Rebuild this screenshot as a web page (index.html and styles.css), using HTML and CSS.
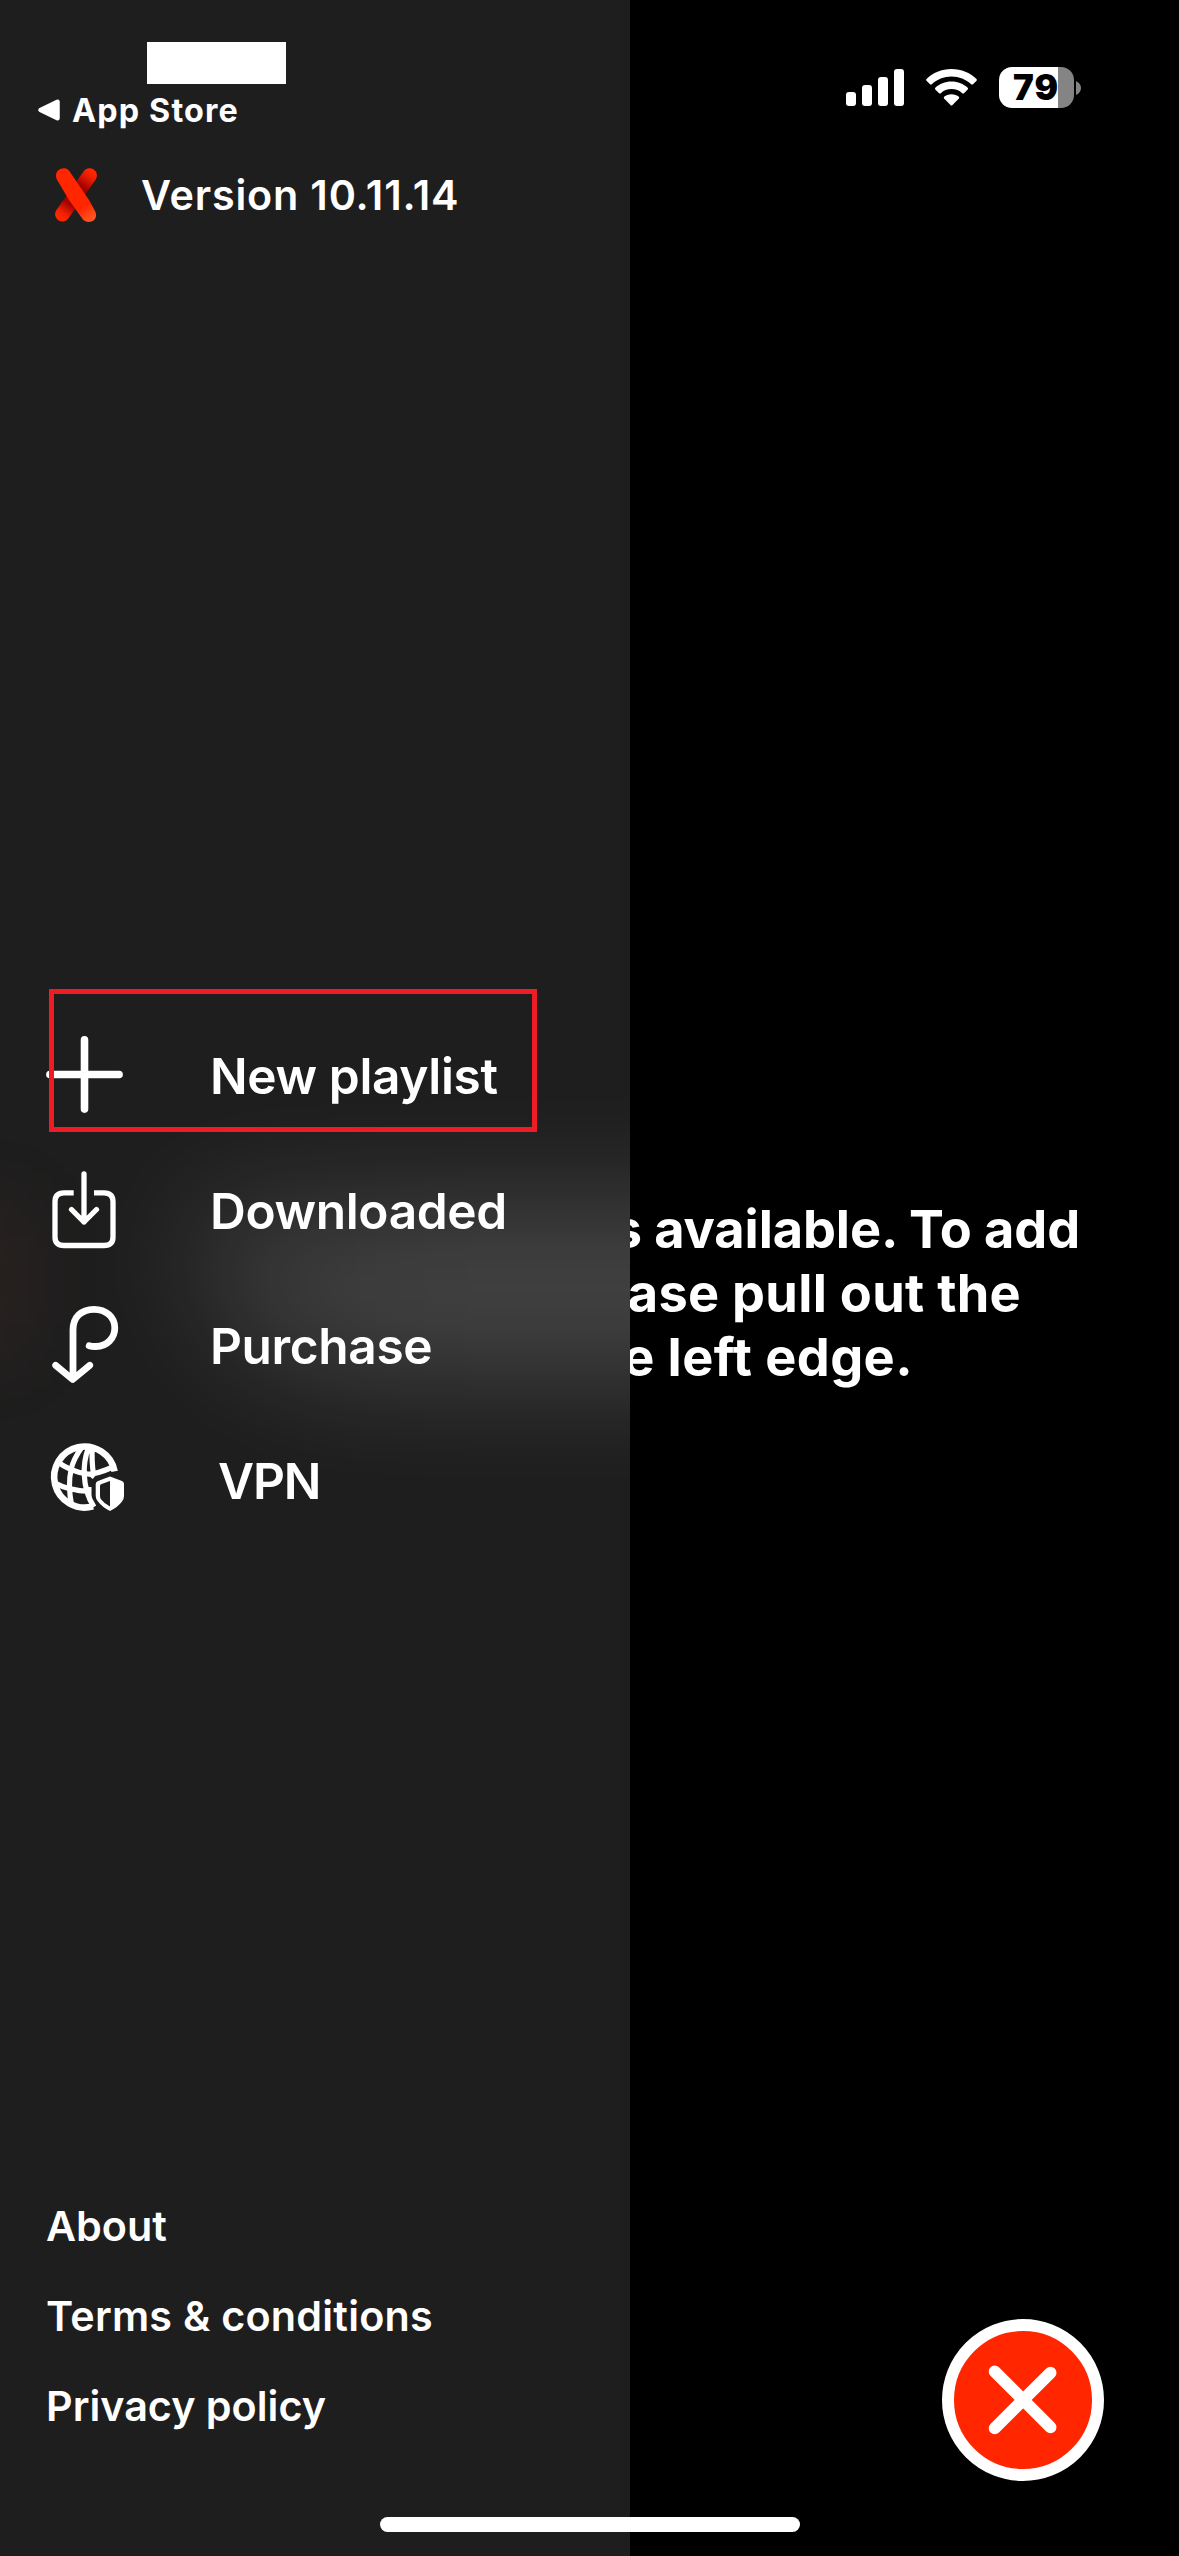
FILE: index.html
```html
<!DOCTYPE html>
<html lang="en">
<head>
<meta charset="utf-8">
<title>Menu</title>
<link rel="stylesheet" href="styles.css">
</head>
<body>
<div class="screen">
  <aside class="drawer">
    <div class="glow"></div>
    <div class="glow-warm"></div>
    <div class="time-mask"></div>
    <div class="back">
      <svg class="back-arrow" viewBox="0 0 24 24"><path d="M3.500 12 20.500 3.800V20.200Z" fill="#fff" stroke="#fff" stroke-width="4.500" stroke-linejoin="round"/></svg>
      <span>App Store</span>
    </div>
    <div class="version">
      <svg class="logo" viewBox="0 0 42 54">
        <defs>
          <linearGradient id="back-limb" gradientUnits="userSpaceOnUse" x1="38" y1="5" x2="5" y2="49">
            <stop offset="0" stop-color="#ff2600"/><stop offset=".13" stop-color="#e01b00"/><stop offset=".32" stop-color="#a00000"/>
            <stop offset=".7" stop-color="#a00000"/><stop offset=".9" stop-color="#ee2000"/><stop offset="1" stop-color="#ff2600"/>
          </linearGradient>
          <linearGradient id="front-limb" gradientUnits="userSpaceOnUse" x1="7" y1="7" x2="38" y2="52">
            <stop offset="0" stop-color="#ff2600"/><stop offset=".7" stop-color="#ff2600"/><stop offset="1" stop-color="#ff5a26"/>
          </linearGradient>
        </defs>
        <path d="M34.600 7.500 7.400 46.300" stroke="url(#back-limb)" stroke-width="14.600" stroke-linecap="round"/>
        <path d="M1.600 11C-1 4 5 -1 11 .600Q13.500 1.500 15 4L34 32 40 43C44 51 36 56 30 53Q28 52 26.500 49.500L14 32Z" fill="url(#front-limb)"/>
      </svg>
      <span>Version 10.11.14</span>
    </div>
    <nav class="menu">
      <a class="item">
        <svg class="icon" viewBox="0 0 90 135"><path d="M9.900 66.500H79.100M44.500 31.900V101.100" stroke-width="7.600"/></svg>
        <span>New playlist</span>
      </a>
      <a class="item">
        <svg class="icon" viewBox="0 0 90 135"><path d="M33.700 49.800H24Q15 49.800 15 58.800V94Q15 102.500 24 102.500H64Q73 102.500 73 94V58.800Q73 49.800 64 49.800H54" stroke-width="5.300" stroke-linecap="butt"/><path d="M44 31V79M31.500 66.500 44 79 56.500 66.500" stroke-width="5.300"/></svg>
        <span>Downloaded</span>
      </a>
      <a class="item">
        <svg class="icon" viewBox="0 0 90 135"><path d="M49.200 67.700Q52 68.600 56 68.500C67 68.500 74.800 60 74.800 50C74.800 39 66 31.300 54 31.300C41 31.300 33 39.500 33 52V101M15.700 87.300 32.700 101.500 49.700 87.300" stroke-width="6.800"/></svg>
        <span>Purchase</span>
      </a>
      <a class="item item-vpn">
        <svg class="icon" viewBox="0 0 90 135">
          <path d="M74.600 58.300A30.500 30.500 0 1 0 53 93.400" stroke-width="6.600" stroke-linecap="butt"/>
          <path d="M41.700 34.500Q33.500 46 31.200 56Q27.500 72 31.700 93M48.500 34.500Q43.500 48 44.300 62Q45 80 54 94M52.300 34.500Q51.500 47 53.500 62M16 47.500Q30 59 48 61Q56 61.500 73 54M15 70Q28 77.500 50 78.500" stroke-width="5.200" stroke-linecap="butt"/>
          <path class="solid" d="M70 63.500 82 68Q84 69 84 71V83Q84 86 82 88.500Q78 94 70 98Q62 94 58 88.500Q55.700 86 55.700 83V71Q55.700 69 58 68ZM70 68 61 71.300Q60 71.700 60 73V83Q60 85 61 86.300Q64.500 91 70 93.500Z"/>
          <path d="M50.500 61.500 54 64.500M49.500 74V87" stroke-width="4" stroke-linecap="butt"/>
        </svg>
        <span>VPN</span>
      </a>
    </nav>
    <div class="links">
      <a>About</a>
      <a class="terms">Terms &amp; conditions</a>
      <a>Privacy policy</a>
    </div>
  </aside>
  <main class="content">
    <div class="status">
      <svg class="signal" viewBox="0 0 58 37" fill="#fff"><rect y="23" width="10" height="14" rx="3"/><rect x="16" y="16" width="10" height="21" rx="3"/><rect x="32" y="8" width="10" height="29" rx="3"/><rect x="48" width="10" height="37" rx="3"/></svg>
      <svg class="wifi" viewBox="0 0 51 37" fill="#fff"><path d="M25.500 0C35.500 0 44 3.800 50.500 10Q51.200 10.900 50.500 11.800L47 15.300Q46 16 45.200 15.300C40 10.400 33 7.500 25.500 7.500S11 10.400 5.800 15.300Q5 16 4 15.300L.500 11.800Q-.200 10.900 .500 10C7 3.800 15.500 0 25.500 0Z"/><path d="M25.500 12.600C32 12.600 37.500 15 41.700 18.800Q42.500 19.700 41.700 20.600L38 24.200Q37 25 36.200 24.200C33.300 21.600 29.700 20.100 25.500 20.100S17.700 21.600 14.800 24.200Q14 25 13 24.200L9.300 20.600Q8.500 19.700 9.300 18.800C13.500 15 19 12.600 25.500 12.600Z"/><path d="M25.500 25.300C28.500 25.300 31 26.200 32.900 27.700Q33.600 28.600 32.900 29.400L26.500 36Q25.500 37 24.500 36L18.100 29.400Q17.400 28.600 18.100 27.700C20 26.200 22.500 25.300 25.500 25.300Z"/></svg>
      <div class="battery"><span>79</span></div>
      <svg class="nub" viewBox="0 0 5 14"><path d="M0 0Q5 2.500 5 7T0 14Z" fill="#848484"/></svg>
    </div>
    <div class="message">
      <div class="line line-1">s available. To add</div>
      <div class="line line-2">ase pull out the</div>
      <div class="line line-3">e left edge.</div>
    </div>
    <button class="close" aria-label="Close">
      <svg viewBox="0 0 138 138"><path d="M40.700 40.500 96.500 96.300M96.500 41.700 40.700 97.200" stroke="#fff" stroke-width="12" stroke-linecap="round"/></svg>
    </button>
  </main>
  <div class="highlight"></div>
  <div class="home-bar"></div>
</div>
</body>
</html>
```
FILE: styles.css
```css
* { box-sizing: border-box; }
body { margin: 0; background: #000; }
.screen {
  position: relative;
  display: flex;
  width: 1179px;
  height: 2556px;
  overflow: hidden;
  color: #fff;
  font-family: Inter, "Liberation Sans", sans-serif;
  font-weight: 600;
  white-space: nowrap;
}
.drawer {
  position: relative;
  flex: none;
  display: flex;
  flex-direction: column;
  width: 630px;
  overflow: hidden;
  background: #1e1e1e;
  isolation: isolate;
}
.glow {
  position: absolute;
  z-index: -1;
  left: 190px;
  top: 1200px;
  width: 700px;
  height: 178px;
  background: linear-gradient(90deg, rgba(255, 255, 255, .11), rgba(255, 255, 255, .165) 240px);
  border-radius: 40px 0 0 170px;
  filter: blur(58px);
}
.glow-warm {
  position: absolute;
  z-index: -1;
  left: -60px;
  top: 1200px;
  width: 90px;
  height: 160px;
  background: rgba(255, 90, 50, .05);
  filter: blur(40px);
}
.time-mask {
  flex: none;
  width: 139px;
  height: 42px;
  margin: 42px 0 6px 147px;
  background: #fff;
}
.back {
  display: flex;
  align-items: center;
  gap: 11px;
  height: 40px;
  padding-left: 37px;
  font-size: 32.3px;
  font-weight: 700;
  letter-spacing: 1.15px;
}
.back-arrow { width: 24px; height: 24px; }
.version {
  display: flex;
  align-items: center;
  gap: 44px;
  height: 60px;
  margin-top: 35px;
  padding-left: 55px;
  font-size: 41.3px;
  letter-spacing: .82px;
}
.logo { width: 42px; height: 54px; }
.menu { margin-top: 783px; }
.item {
  display: flex;
  align-items: center;
  gap: 80px;
  height: 135px;
  padding-left: 40px;
  font-size: 49.6px;
  letter-spacing: -.37px;
}
.item-vpn { gap: 88px; letter-spacing: -1.2px; }
.icon {
  width: 90px;
  height: 135px;
  fill: none;
  stroke: #fff;
  stroke-linecap: round;
  stroke-linejoin: round;
}
.icon .solid { fill: #fff; stroke: none; }
.links {
  display: flex;
  flex-direction: column;
  margin-top: 633px;
  padding-left: 46px;
  font-size: 41.3px;
  line-height: 90px;
}
.terms { letter-spacing: .23px; }
.content {
  flex: 1;
  display: flex;
  flex-direction: column;
  overflow: hidden;
  background: #000;
}
.status {
  display: flex;
  align-items: center;
  height: 41px;
  margin-top: 67px;
  padding-left: 216px;
}
.signal { width: 58px; height: 37px; }
.wifi { width: 51px; height: 37px; margin-left: 22px; }
.battery {
  width: 75px;
  height: 41px;
  margin-left: 22px;
  padding-left: 14px;
  border-radius: 13px;
  background: linear-gradient(90deg, #fff 59px, #848484 59px);
  color: #000;
  font-size: 35px;
  font-weight: 900;
  line-height: 41px;
  letter-spacing: 1px;
}
.nub { width: 5px; height: 14px; margin-left: 2px; }
.message {
  margin-top: 1089px;
  font-size: 52.3px;
  font-weight: 700;
  line-height: 64px;
}
.line { display: flex; justify-content: flex-end; }
.line-1 { padding-right: 99px; letter-spacing: -.1px; }
.line-2 { padding-right: 158px; letter-spacing: .29px; }
.line-3 { padding-right: 266px; letter-spacing: .4px; }
.close {
  width: 162px;
  height: 162px;
  margin: 930px 0 0 312px;
  padding: 0;
  border: 12px solid #fff;
  border-radius: 50%;
  background: #ff2600;
}
.close svg { display: block; width: 138px; height: 138px; }
.highlight {
  position: absolute;
  left: 49px;
  top: 989px;
  width: 488px;
  height: 143px;
  border: 5px solid #ee1c24;
}
.home-bar {
  position: absolute;
  left: 380px;
  top: 2517px;
  width: 420px;
  height: 15px;
  border-radius: 8px;
  background: #fff;
}
```
